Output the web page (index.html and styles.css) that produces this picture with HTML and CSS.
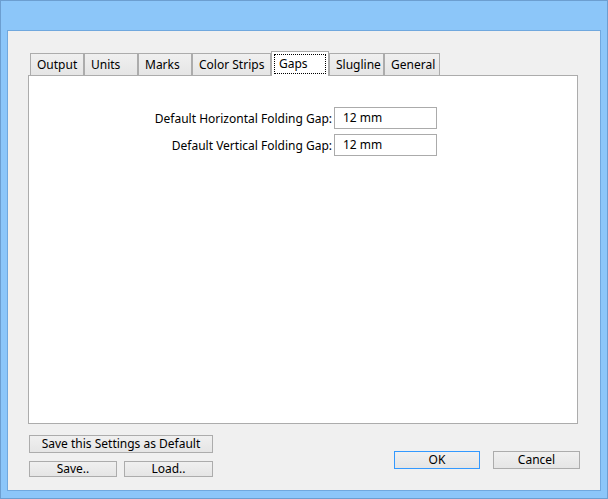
FILE: index.html
```html
<!DOCTYPE html>
<html lang="en">
<head>
  <meta charset="UTF-8">
  <title>Settings</title>
  <link rel="stylesheet" href="styles.css">
</head>
<body>
  <div class="window">
    <div class="client">

      <div class="tabs">
        <div class="tab w-output">Output</div>
        <div class="tab w-units">Units</div>
        <div class="tab w-marks">Marks</div>
        <div class="tab w-strips">Color Strips</div>
        <div class="tab selected w-gaps"><span class="focus">Gaps</span></div>
        <div class="tab w-slug">Slugline</div>
        <div class="tab w-general">General</div>
      </div>

      <div class="panel">
        <div class="form">
          <label>Default Horizontal Folding Gap:</label>
          <div class="field">12 mm</div>
          <label>Default Vertical Folding Gap:</label>
          <div class="field">12 mm</div>
        </div>
      </div>

      <div class="footer">
        <div class="left">
          <button class="btn wide">Save this Settings as Default</button>
          <div class="row">
            <button class="btn small w-save">Save..</button>
            <button class="btn small w-load">Load..</button>
          </div>
        </div>
        <div class="right">
          <button class="btn default w-ok">OK</button>
          <button class="btn w-cancel">Cancel</button>
        </div>
      </div>

    </div>
  </div>
</body>
</html>
```

FILE: styles.css
```css
* { box-sizing: border-box; }

body {
  margin: 0;
  font-family: "Noto Sans", "Open Sans", sans-serif;
  font-size: 12px;
  color: #000;
  overflow: hidden;
}

/* ---- window frame ---- */
.window {
  width: 608px; height: 499px;
  border: 1px solid #6c9ed0;
  background: #8cc6f9;
  padding: 29px 6px 7px 6px;
}
.client {
  height: 100%;
  border: 1px solid #70a8de;
  background: #f0f0f0;
  padding: 20px 0 0 20px;
}

/* ---- tabs ---- */
.tabs {
  display: flex; align-items: flex-end;
  margin-left: 2px; height: 24px;
  position: relative; z-index: 1;
}
.tab {
  height: 22px;
  border: 1px solid #acacac; border-bottom: none;
  background: linear-gradient(#f0f0f0, #e5e5e5);
  padding-left: 6px;
  line-height: 22px;
  white-space: nowrap;
}
.tab.selected {
  height: 25px; margin-bottom: -1px;
  background: #fff;
  padding: 2px 2px 0 2px;
}
.focus {
  display: block; height: 20px;
  border: 1px dotted #000;
  padding-left: 4px;
  line-height: 18px;
}
.w-output, .w-units, .w-marks { width: 54px; }
.w-strips { width: 79px; }
.w-gaps { width: 58px; }
.w-slug { width: 55px; }
.w-general { width: 56px; }

/* ---- page body ---- */
.panel {
  width: 550px; height: 349px;
  border: 1px solid #acacac;
  background: #fff;
}
.form {
  display: grid;
  grid-template-columns: 303px 103px;
  column-gap: 2px; row-gap: 5px;
  align-items: center;
  padding-top: 31px;
}
.form label { text-align: right; white-space: nowrap; }
.field {
  height: 22px;
  border: 1px solid #ababab;
  padding-left: 8px;
  line-height: 20px;
  background: #fff;
}

/* ---- buttons ---- */
.footer { display: flex; margin-top: 11px; }
.left { margin-left: 1px; }
.row { display: flex; gap: 7px; margin-top: 8px; }
.right { display: flex; gap: 13px; margin: 16px 20px 0 auto; }

.btn {
  font: inherit; color: #000;
  height: 18px; padding: 0;
  border: 1px solid #acacac;
  background: linear-gradient(#f0f0f0, #e5e5e5);
  line-height: 16px;
  text-align: center;
}
.btn.wide { width: 184px; }
.btn.small { height: 16px; line-height: 14px; }
.btn.default { border-color: #3399ff; }
.w-save { width: 88px; }
.w-load { width: 89px; }
.w-ok { width: 86px; }
.w-cancel { width: 87px; }
```
